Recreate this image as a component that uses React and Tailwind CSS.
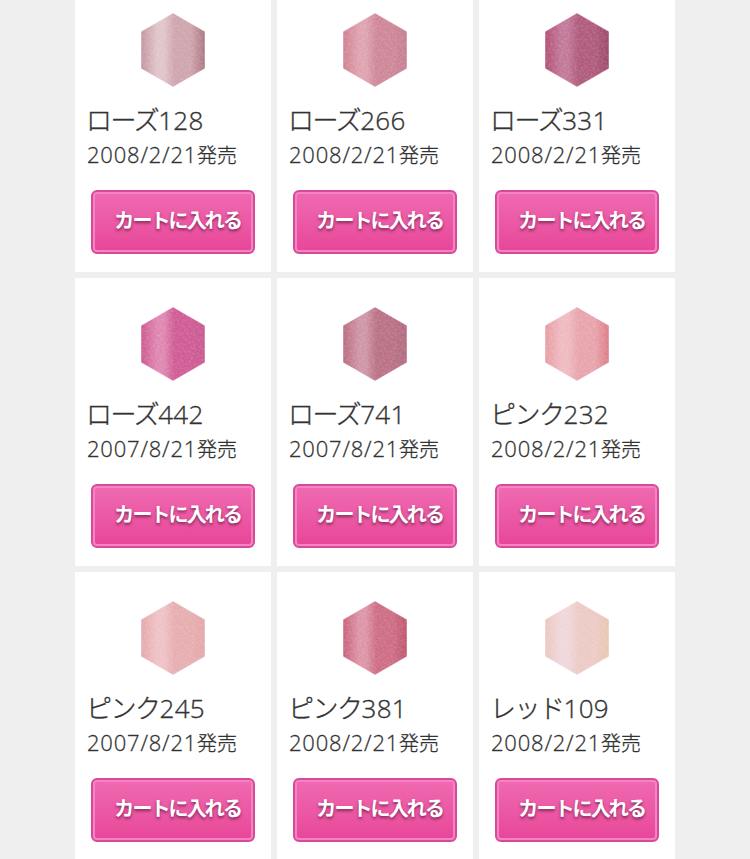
import { useId } from "react";

// stops run left to right: edge, highlight, body, right edge
const products = [
  { name: "ローズ", number: "128", date: "2008/2/21", stops: ["#c3949e", "#e0c5cb", "#cfa5ae", "#ad7480"] },
  { name: "ローズ", number: "266", date: "2008/2/21", stops: ["#cf8090", "#dfa3b0", "#cf8798", "#c47e90"] },
  { name: "ローズ", number: "331", date: "2008/2/21", stops: ["#b14f74", "#c3789a", "#b05b7c", "#9c496a"] },
  { name: "ローズ", number: "442", date: "2007/8/21", stops: ["#cc5890", "#df87b1", "#cf5c95", "#c95a91"] },
  { name: "ローズ", number: "741", date: "2007/8/21", stops: ["#b86a80", "#cf96a6", "#ba7186", "#b26b80"] },
  { name: "ピンク", number: "232", date: "2008/2/21", stops: ["#e79ba3", "#f0bac2", "#e8a4ac", "#dc7b86"] },
  { name: "ピンク", number: "245", date: "2007/8/21", stops: ["#e5a7ab", "#efc2c6", "#e7aeb1", "#e3a7a9"] },
  { name: "ピンク", number: "381", date: "2008/2/21", stops: ["#c9607a", "#dd95a7", "#ce6d84", "#c0546f"] },
  { name: "レッド", number: "109", date: "2008/2/21", stops: ["#ecc7bd", "#f0d7dc", "#eccbc6", "#e8c6b0"] },
];

function Swatch({ stops }) {
  const id = useId();
  const points = "33,1 65,19.5 65,56.5 33,75 1,56.5 1,19.5";

  return (
    <svg width="66" height="76" viewBox="0 0 66 76" className="block">
      <defs>
        <linearGradient id={`${id}-fill`}>
          <stop offset="0" stopColor={stops[0]} />
          <stop offset="0.25" stopColor={stops[1]} />
          <stop offset="0.36" stopColor={stops[1]} />
          <stop offset="0.52" stopColor={stops[2]} />
          <stop offset="0.78" stopColor={stops[2]} />
          <stop offset="1" stopColor={stops[3]} />
        </linearGradient>
        <clipPath id={`${id}-clip`}>
          <polygon points={points} />
        </clipPath>
        {/* shimmer of the pearl */}
        <filter id={`${id}-grain`} x="0" y="0" width="100%" height="100%">
          <feTurbulence type="fractalNoise" baseFrequency="0.45" numOctaves="2" />
          <feColorMatrix values="0 0 0 0 1  0 0 0 0 1  0 0 0 0 1  1.2 0 0 0 -0.45" />
        </filter>
      </defs>
      <polygon points={points} fill={`url(#${id}-fill)`} />
      <g clipPath={`url(#${id}-clip)`}>
        <rect width="66" height="76" filter={`url(#${id}-grain)`} opacity="0.3" />
      </g>
      <polygon points={points} fill="none" stroke="#fff" strokeOpacity="0.45" />
    </svg>
  );
}

function CartButton() {
  return (
    <button
      type="button"
      className="ml-[3px] mt-[18px] flex h-16 w-[164px] rounded-md border-2 border-[#d64b98] bg-[#d64b98]"
    >
      <span className="flex h-full w-full items-center justify-end rounded-[4px] border-2 border-[#f582c3] bg-linear-to-b from-[#ef69b0] to-[#e84799] pr-[10px] pb-1 text-[20px] font-bold tracking-[-1.9px] whitespace-nowrap text-white [text-shadow:0_2px_3px_rgba(90,20,60,0.7)]">
        カートに入れる
      </span>
    </button>
  );
}

function ProductCard({ product }) {
  return (
    <li className="h-72 bg-white px-[13px] pt-7">
      <div className="flex justify-center">
        <Swatch stops={product.stops} />
      </div>
      <p className="mt-[14px] -ml-[2px] h-[34px] text-[26px] leading-[34px] font-light tracking-[-1.5px] whitespace-nowrap [-webkit-text-stroke:0.35px_#333]">
        {product.name}
        <span className="font-['Open_Sans'] tracking-[0.3px]">{product.number}</span>
      </p>
      <p className="mt-[2px] -ml-px h-[34px] text-[20px] leading-[33px] font-light whitespace-nowrap [-webkit-text-stroke:0.3px_#333]">
        <span className="font-['Open_Sans'] text-[22px] tracking-[0.8px]">{product.date}</span>
        発売
      </p>
      <CartButton />
    </li>
  );
}

export default function App() {
  return (
    <main className="flex h-[859px] justify-center overflow-hidden bg-[#efefef] font-['Noto_Sans_CJK_JP',sans-serif] text-[#333]">
      <ul className="-mt-4 grid w-[600px] grid-cols-3 content-start gap-1.5">
        {products.map((product) => (
          <ProductCard key={product.name + product.number} product={product} />
        ))}
      </ul>
    </main>
  );
}
